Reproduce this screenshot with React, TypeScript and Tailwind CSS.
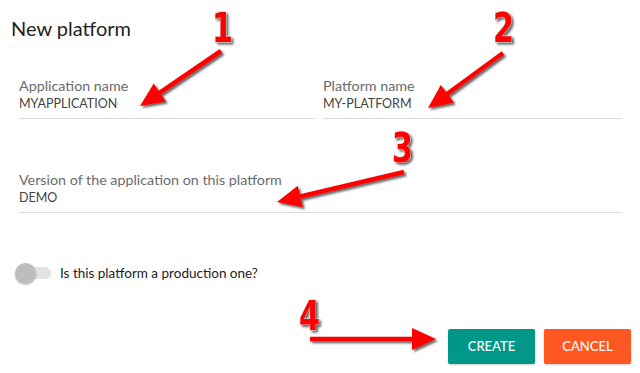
import React from "react";

type Pt = [number, number];

function arrowPoints(start: Pt, tip: Pt, shaft = 4.5, headLen = 24, headW = 22): string {
  const dx = tip[0] - start[0];
  const dy = tip[1] - start[1];
  const len = Math.hypot(dx, dy);
  const ux = dx / len;
  const uy = dy / len;
  const nx = -uy;
  const ny = ux;
  const bx = tip[0] - ux * headLen;
  const by = tip[1] - uy * headLen;
  const s = shaft / 2;
  const h = headW / 2;
  const pts: Pt[] = [
    [start[0] + nx * s, start[1] + ny * s],
    [bx + nx * s, by + ny * s],
    [bx + nx * h, by + ny * h],
    [tip[0], tip[1]],
    [bx - nx * h, by - ny * h],
    [bx - nx * s, by - ny * s],
    [start[0] - nx * s, start[1] - ny * s],
  ];
  return pts.map((p) => `${p[0].toFixed(1)},${p[1].toFixed(1)}`).join(" ");
}

const arrows: { start: Pt; tip: Pt }[] = [
  { start: [221, 51], tip: [140, 106] },
  { start: [503, 53], tip: [428, 108] },
  { start: [404, 172], tip: [277, 202] },
  { start: [310, 339], tip: [436, 339] },
];

const numbers: { n: string; x: number; y: number }[] = [
  { n: "1", x: 212, y: 42 },
  { n: "2", x: 493, y: 42 },
  { n: "3", x: 392, y: 162 },
  { n: "4", x: 299, y: 330 },
];

function Annotations() {
  return (
    <svg
      className="absolute left-0 top-0 pointer-events-none"
      width={640}
      height={373}
      viewBox="0 0 640 373"
    >
      <defs>
        <filter id="sh" x="-20%" y="-20%" width="140%" height="140%">
          <feDropShadow dx="2" dy="2" stdDeviation="1.2" floodColor="#333" floodOpacity="0.75" />
        </filter>
      </defs>
      {arrows.map((a, i) => (
        <polygon key={i} points={arrowPoints(a.start, a.tip)} fill="#ff0000" filter="url(#sh)" />
      ))}
      {numbers.map((t) => (
        <text
          key={t.n}
          x={t.x}
          y={t.y}
          fontSize={41}
          fontWeight={900}
          fontFamily="'Liberation Sans Narrow', 'DejaVu Sans Condensed', 'Liberation Sans', sans-serif"
          textLength={21}
          lengthAdjust="spacingAndGlyphs"
          fill="#ff0000"
          stroke="#cfcfcf"
          strokeWidth={1}
          paintOrder="stroke"
          filter="url(#sh)"
        >
          {t.n}
        </text>
      ))}
    </svg>
  );
}

function Field({ label, value, className }: { label: string; value: string; className?: string }) {
  return (
    <div className={`flex flex-col border-b border-[#dcdcdc] pb-[5px] ${className ?? ""}`}>
      <span className="text-[14.3px] leading-[18px] text-[#6b6b6b]">{label}</span>
      <span className="text-[12.5px] leading-[18px] text-[#444]">{value}</span>
    </div>
  );
}

export default function App() {
  return (
    <div
      className="relative w-[640px] h-[373px] bg-white overflow-hidden flex flex-col"
      style={{ fontFamily: "Lato, 'Open Sans', sans-serif" }}
    >
      <h1 className="pl-[11px] pt-[16px] text-[20px] leading-[24px] text-[#222] font-normal">New platform</h1>

      <div className="mt-[37px] pl-[19px] pr-[18px] flex gap-[7px]">
        <Field label="Application name" value="MYAPPLICATION" className="w-[297px]" />
        <Field label="Platform name" value="MY-PLATFORM" className="flex-1" />
      </div>

      <div className="mt-[52px] pl-[19px] pr-[18px]">
        <Field label="Version of the application on this platform" value="DEMO" />
      </div>

      <div className="mt-[49px] pl-[15px] flex items-center h-[22px]">
        <div className="relative w-[36px] h-[22px] flex items-center">
          <div className="absolute left-[4px] w-[32px] h-[12px] rounded-full bg-[#e2e2e2]" />
          <div className="absolute left-0 w-[21px] h-[21px] rounded-full bg-[#bdbdbd] shadow-[0_1px_2px_rgba(0,0,0,0.25)]" />
        </div>
        <span className="ml-[9px] text-[13.5px] text-[#222]">Is this platform a production one?</span>
      </div>

      <div className="mt-[45px] pr-[9px] flex justify-end gap-[9px]">
        <button className="w-[87px] h-[35px] rounded-[2px] bg-[#009688] text-white text-[13px] font-medium uppercase shadow-[0_1px_2px_rgba(0,0,0,0.2)]">
          Create
        </button>
        <button className="w-[87px] h-[35px] rounded-[2px] bg-[#ff5722] text-white text-[13px] font-medium uppercase shadow-[0_1px_2px_rgba(0,0,0,0.2)]">
          Cancel
        </button>
      </div>

      <Annotations />
    </div>
  );
}
